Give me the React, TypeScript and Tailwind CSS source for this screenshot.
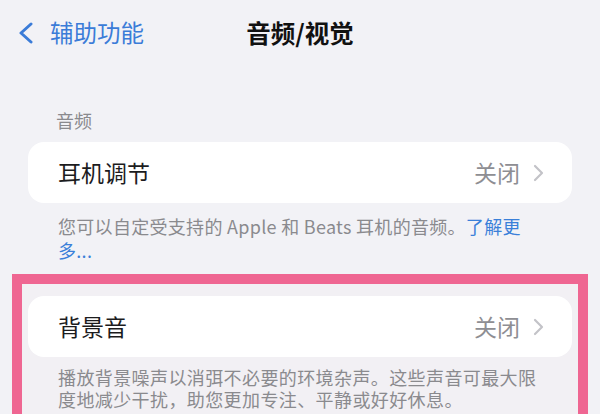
import React from 'react';

const font = { fontFamily: '"Noto Sans CJK SC", "Noto Sans", sans-serif' };

const Chevron = () => (
    <svg width="12" height="18" viewBox="0 0 12 18" fill="none" className="ml-[12px]">
        <path d="M3 2l7 7-7 7" stroke="#c3c3c8" strokeWidth="2.2" strokeLinecap="round" strokeLinejoin="round" />
    </svg>
);

const Row = ({ label, value }: { label: string; value: string }) => (
    <div className="h-[61px] bg-white rounded-[16px] flex items-center pl-[30px] pr-[28px]">
        <div className="flex-1 text-[23px] text-[#1c1c1e]">{label}</div>
        <div className="text-[23px] text-[#8e8e93]">{value}</div>
        <Chevron />
    </div>
);

export default function App() {
    return (
        <div className="w-[600px] h-[414px] overflow-hidden bg-[#f2f2f6]" style={font}>
            {/* 导航栏 */}
            <div className="relative h-[66px] flex items-center">
                <div className="flex items-center pl-[18px] text-[#3b7cd8]">
                    <svg width="16" height="22" viewBox="0 0 16 22" fill="none">
                        <path d="M13 2L3 11l10 9" stroke="#3b7cd8" strokeWidth="3" strokeLinecap="round" strokeLinejoin="round" />
                    </svg>
                    <span className="ml-[16px] text-[23.5px] leading-none">辅助功能</span>
                </div>
                <div className="absolute left-0 right-0 text-center text-[24.5px] font-bold text-[#111] pointer-events-none">
                    音频/视觉
                </div>
            </div>

            <div className="px-[28px]">
                <div className="mt-[42px] pl-[28px] text-[18px] leading-[24px] text-[#8a8a8e]">音频</div>
                <div className="mt-[10px]">
                    <Row label="耳机调节" value="关闭" />
                </div>
                <p className="mt-[11px] ml-[30px] w-[478px] text-[18px] leading-[24px] tracking-[0.3px] text-[#8a8a8e]">
                    <span>您可以自定受支持的 Apple 和 Beats 耳机的音频。</span><span className="text-[#3a80d9]">了解更多...</span>
                </p>

                {/* 高亮区域 */}
                <div className="-mx-[16px] mt-[12px] border-[10px] border-[#ef6692] border-b-0 px-[6px] pt-[12px] pb-[40px] bg-[#f2f0f4]">
                    <Row label="背景音" value="关闭" />
                    <p className="mt-[9px] ml-[30px] w-[484px] text-[18px] leading-[22px] tracking-[0.4px] text-[#8a8a8e]">
                        播放背景噪声以消弭不必要的环境杂声。这些声音可最大限度地减少干扰，助您更加专注、平静或好好休息。
                    </p>
                </div>
            </div>
        </div>
    );
}
